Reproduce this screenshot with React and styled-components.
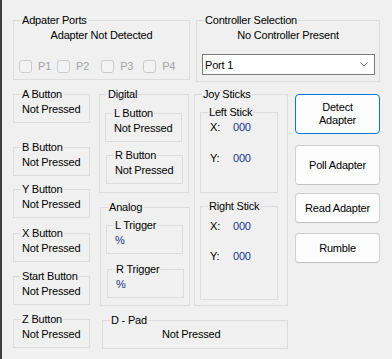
import React from 'react';
import styled, { createGlobalStyle } from 'styled-components';

const GlobalStyle = createGlobalStyle`
  html, body {
    margin: 0;
    padding: 0;
    background: #f0f0f0;
  }
  * {
    box-sizing: border-box;
  }
`;

const Window = styled.div`
  width: 392px;
  height: 359px;
  background: #f0f0f0;
  border-left: 2px solid #3f3f3f;
  padding-left: 11px;
  font-family: "Liberation Sans", Arial, sans-serif;
  font-size: 11px;
  letter-spacing: -0.2px;
  color: #000;
  overflow: hidden;
`;

const TopRow = styled.div`
  display: flex;
  align-items: flex-start;
  margin-top: 14px;
`;

const Group = styled.fieldset`
  margin: ${(p) => p.$mt || 0}px 0 0 ${(p) => p.$ml || 0}px;
  padding: 0;
  min-width: 0;
  width: ${(p) => p.$w}px;
  height: ${(p) => p.$h}px;
  border: 1px solid #dcdcdc;
  flex-shrink: 0;
`;

const Legend = styled.legend`
  margin-left: 7px;
  padding: 0 1px;
  line-height: 13px;
  height: 13px;
`;

const Value = styled.div`
  line-height: 13px;
  padding-left: ${(p) => (p.$pl === undefined ? 8 : p.$pl)}px;
  margin-top: ${(p) => (p.$mt === undefined ? 2 : p.$mt)}px;
  color: ${(p) => (p.$blue ? '#17378a' : '#000')};
`;

const Status = styled.div`
  line-height: 13px;
  margin-top: 2px;
  text-align: center;
`;

const CheckRow = styled.div`
  display: flex;
  align-items: center;
  margin-top: 18px;
  height: 13px;
`;

const Check = styled.label`
  display: flex;
  align-items: center;
  margin-left: ${(p) => p.$ml}px;
  color: #a3a3a3;
  line-height: 13px;
`;

const Box = styled.span`
  display: inline-block;
  width: 13px;
  height: 13px;
  border: 1px solid #cbcbcb;
  border-radius: 3px;
  background: #f3f3f3;
  margin-right: 6px;
`;

const Select = styled.div`
  display: flex;
  align-items: center;
  justify-content: space-between;
  margin: 12px 0 0 5px;
  width: 173px;
  height: 21px;
  background: #fff;
  border: 1px solid #7a7a7a;
  padding: 0 6px 0 2px;
`;

const Main = styled.div`
  display: flex;
  align-items: flex-start;
  margin-top: 6px;
`;

const Column = styled.div`
  display: flex;
  flex-direction: column;
  margin-left: ${(p) => p.$ml || 0}px;
  width: ${(p) => p.$w}px;
  flex-shrink: 0;
`;

const Row = styled.div`
  display: flex;
  align-items: flex-start;
`;

const StickRow = styled.div`
  display: flex;
  line-height: 13px;
  padding-left: 9px;
  margin-top: ${(p) => p.$mt}px;
`;

const Axis = styled.span`
  width: 23px;
`;

const Num = styled.span`
  color: #17378a;
`;

const Button = styled.button`
  width: 85px;
  height: ${(p) => p.$h}px;
  margin-top: ${(p) => p.$mt}px;
  padding: 0;
  font: inherit;
  letter-spacing: inherit;
  line-height: 13px;
  color: #000;
  background: #fdfdfd;
  border: 1px solid ${(p) => (p.$focus ? '#0078d4' : '#d0d0d0')};
  border-bottom-color: ${(p) => (p.$focus ? '#0078d4' : '#c2c2c2')};
  border-radius: 4px;
`;

const ButtonGroup = ({ title, mt, ml = 0, w = 77 }) => (
  <Group $w={w} $h={35} $mt={mt} $ml={ml}>
    <Legend>{title}</Legend>
    <Value>Not Pressed</Value>
  </Group>
);

const TriggerGroup = ({ title, mt, ml }) => (
  <Group $w={77} $h={35} $mt={mt} $ml={ml}>
    <Legend>{title}</Legend>
    <Value $blue>%</Value>
  </Group>
);

const Stick = ({ title, mt, h, xmt, ymt }) => (
  <Group $w={78} $h={h} $mt={mt} $ml={5}>
    <Legend>{title}</Legend>
    <StickRow $mt={xmt}>
      <Axis>X:</Axis>
      <Num>000</Num>
    </StickRow>
    <StickRow $mt={ymt}>
      <Axis>Y:</Axis>
      <Num>000</Num>
    </StickRow>
  </Group>
);

const Chevron = () => (
  <svg width="8" height="5" viewBox="0 0 8 5">
    <path d="M0.5 0.5 L4 4 L7.5 0.5" fill="none" stroke="#5f5f5f" strokeWidth="1" />
  </svg>
);

export default function App() {
  return (
    <>
      <GlobalStyle />
      <Window>
        <TopRow>
          <Group $w={177} $h={66}>
            <Legend>Adpater Ports</Legend>
            <Status>Adapter Not Detected</Status>
            <CheckRow>
              <Check $ml={5}><Box />P1</Check>
              <Check $ml={6}><Box />P2</Check>
              <Check $ml={12}><Box />P3</Check>
              <Check $ml={10}><Box />P4</Check>
            </CheckRow>
          </Group>
          <Group $w={184} $h={68} $ml={6}>
            <Legend>Controller Selection</Legend>
            <Status>No Controller Present</Status>
            <Select>
              <span>Port 1</span>
              <Chevron />
            </Select>
          </Group>
        </TopRow>

        <Main>
          <Column $w={77}>
            <ButtonGroup title="A Button" mt={0} />
            <ButtonGroup title="B Button" mt={18} />
            <ButtonGroup title="Y Button" mt={7} />
            <ButtonGroup title="X Button" mt={9} />
            <ButtonGroup title="Start Button" mt={8} />
            <ButtonGroup title="Z Button" mt={8} />
          </Column>

          <Column $ml={9} $w={189}>
            <Row>
              <Column $w={91}>
                <Group $w={90} $h={105}>
                  <Legend>Digital</Legend>
                  <ButtonGroup title="L Button" mt={6} ml={5} />
                  <ButtonGroup title="R Button" mt={7} ml={6} />
                </Group>
                <Group $w={90} $h={105} $mt={8} $ml={1}>
                  <Legend>Analog</Legend>
                  <TriggerGroup title="L Trigger" mt={5} ml={5} />
                  <TriggerGroup title="R Trigger" mt={9} ml={6} />
                </Group>
              </Column>
              <Group $w={94} $h={218} $ml={4}>
                <Legend>Joy Sticks</Legend>
                <Stick title="Left Stick" mt={5} h={87} xmt={2} ymt={18} />
                <Stick title="Right Stick" mt={7} h={100} xmt={7} ymt={17} />
              </Group>
            </Row>
            <Group $w={186} $h={35} $mt={8} $ml={3}>
              <Legend>D - Pad</Legend>
              <Value $pl={59} $mt={1}>Not Pressed</Value>
            </Group>
          </Column>

          <Column $ml={7} $w={85}>
            <Button $h={40} $mt={6} $focus>Detect<br />Adapter</Button>
            <Button $h={40} $mt={11}>Poll Adapter</Button>
            <Button $h={30} $mt={8}>Read Adapter</Button>
            <Button $h={30} $mt={10}>Rumble</Button>
          </Column>
        </Main>
      </Window>
    </>
  );
}
